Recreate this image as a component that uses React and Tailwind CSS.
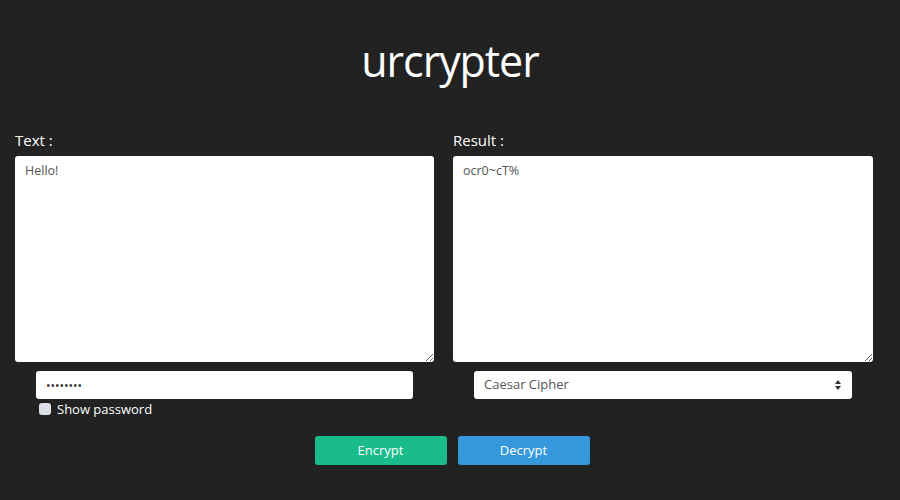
import React, { useState } from 'react';

const font = { fontFamily: '"Open Sans", "Liberation Sans", sans-serif' };

export default function App() {
  const [text, setText] = useState('Hello!');
  const [showPw, setShowPw] = useState(false);

  return (
    <div className="min-h-[500px] w-full bg-[#222222] text-white" style={font}>
      <h1 className="pt-[34px] text-center text-[43px] leading-[54px] font-normal tracking-tight">urcrypter</h1>

      <div className="mt-[42px] flex gap-[19px] pl-[15px]">
        {/* Input side */}
        <div className="flex w-[419px] flex-col">
          <label className="mb-[6px] text-[15px] leading-[20px]">Text :</label>
          <textarea
            value={text}
            onChange={(e) => setText(e.target.value)}
            className="h-[206px] w-full rounded-[3px] bg-white px-[10px] py-[6px] text-[12.5px] text-[#555] outline-none"
          />
          <div className="mt-[9px] pl-[21px]">
            <input
              type={showPw ? 'text' : 'password'}
              defaultValue="password"
              className="h-[28px] w-[377px] rounded-[3px] bg-white px-[10px] text-[12px] text-[#333] outline-none"
            />
            <label className="mt-[3px] flex items-center gap-[6px] pl-[3px] text-[13px] leading-[14px]">
              <span
                onClick={() => setShowPw(!showPw)}
                className="block h-[12px] w-[12px] rounded-[3px] bg-[#dde0e6]"
              />
              Show password
            </label>
          </div>
        </div>

        {/* Output side */}
        <div className="flex w-[420px] flex-col">
          <label className="mb-[6px] text-[15px] leading-[20px]">Result :</label>
          <textarea
            readOnly
            value="ocr0~cT%"
            className="h-[206px] w-full rounded-[3px] bg-white px-[10px] py-[6px] text-[12.5px] text-[#555] outline-none"
          />
          <div className="mt-[9px] pl-[21px]">
            <div className="relative h-[28px] w-[378px]">
              <select className="h-full w-full appearance-none rounded-[3px] bg-white px-[10px] text-[13px] text-[#555] outline-none">
                <option>Caesar Cipher</option>
                <option>Vigenère Cipher</option>
              </select>
              <svg className="pointer-events-none absolute right-[11px] top-[9px]" width="6" height="10" viewBox="0 0 6 10">
                <path d="M3 0 L6 4 H0 Z M3 10 L6 6 H0 Z" fill="#333" />
              </svg>
            </div>
          </div>
        </div>
      </div>

      <div className="mt-[20px] flex justify-center gap-[11px] pl-[4px]">
        <button className="h-[29px] w-[132px] rounded-[3px] bg-[#1abc8c] text-[13px] text-white">Encrypt</button>
        <button className="h-[29px] w-[132px] rounded-[3px] bg-[#3498db] text-[13px] text-white">Decrypt</button>
      </div>
    </div>
  );
}
